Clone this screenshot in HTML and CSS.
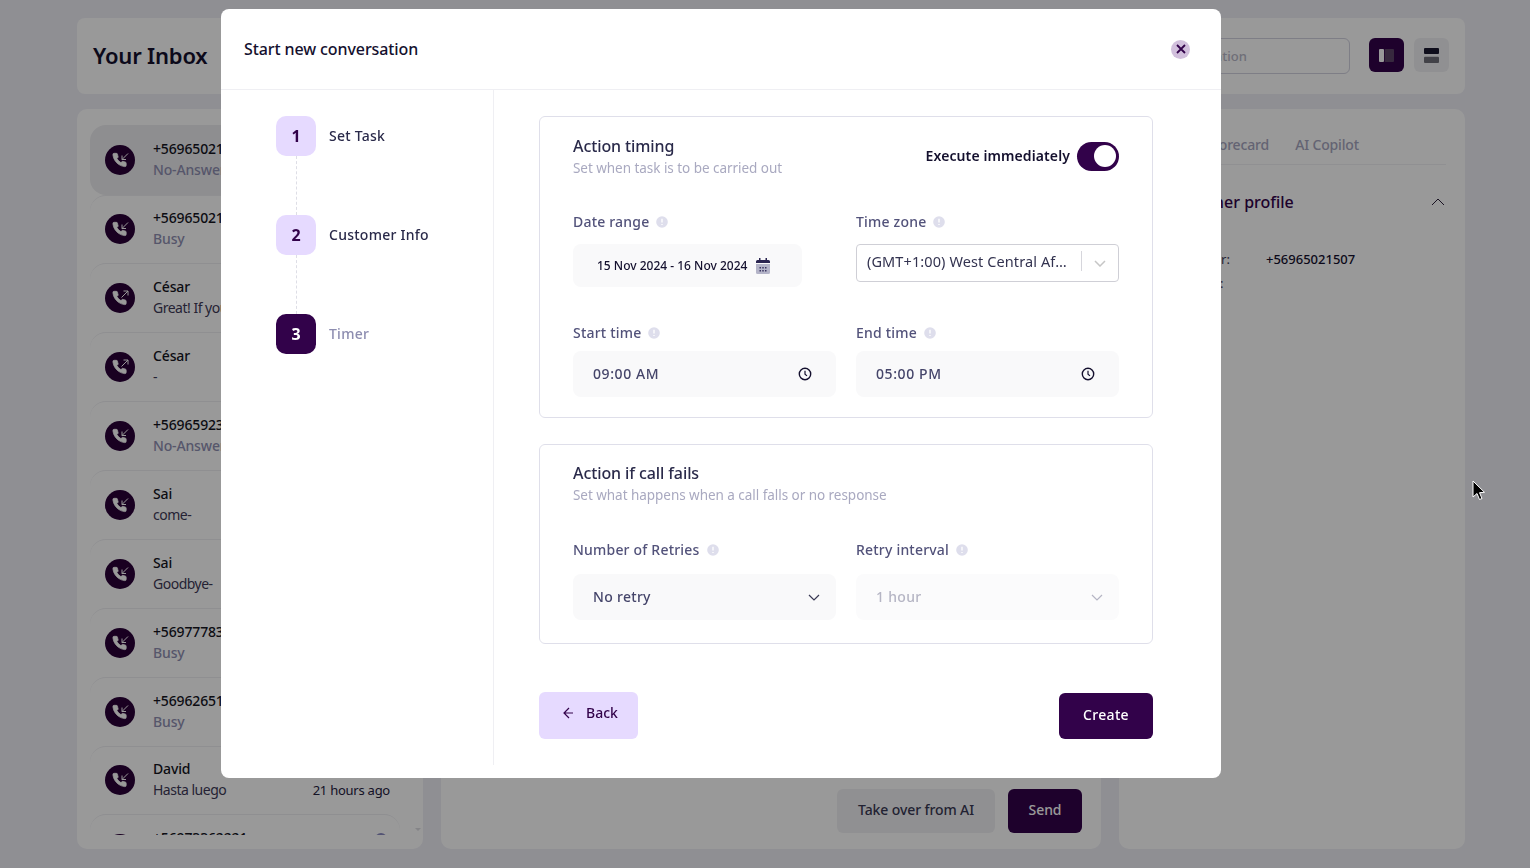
FILE: index.html
```html
<!DOCTYPE html>
<html lang="en">
<head>
<meta charset="utf-8">
<title>Your Inbox</title>
<link rel="stylesheet" href="styles.css">
</head>
<body>
<svg class="defs" width="0" height="0" aria-hidden="true">
  <symbol id="phone" viewBox="0 0 24 24"><path d="M22 16.92v3a2 2 0 0 1-2.18 2 19.79 19.79 0 0 1-8.63-3.07 19.5 19.5 0 0 1-6-6 19.79 19.79 0 0 1-3.07-8.67A2 2 0 0 1 4.11 2h3a2 2 0 0 1 2 1.72 12.84 12.84 0 0 0 .7 2.81 2 2 0 0 1-.45 2.11L8.09 9.91a16 16 0 0 0 6 6l1.27-1.27a2 2 0 0 1 2.11-.45 12.84 12.84 0 0 0 2.81.7A2 2 0 0 1 22 16.92z" fill="#fff" stroke="#fff" stroke-width="1.200"/></symbol>
  <symbol id="call-in" viewBox="0 0 30 30"><circle cx="15" cy="15" r="15" fill="#2a0038"/><use href="#phone" x="6.500" y="7" width="16" height="16"/><path d="M23 8.500 17 14.500M17 10.500v4h4" fill="none" stroke="#fff" stroke-width="1"/></symbol>
  <symbol id="call-out" viewBox="0 0 30 30"><circle cx="15" cy="15" r="15" fill="#2a0038"/><use href="#phone" x="6.500" y="7" width="16" height="16"/><path d="M16.500 14.500 23 8M18.500 8H23v4.500" fill="none" stroke="#fff" stroke-width="1"/></symbol>
  <symbol id="info" viewBox="0 0 12 12"><circle cx="6" cy="6" r="5.800" fill="#dedeec"/><path d="M6 2.800v3.800M6 8v1" stroke="#fff" stroke-width="1.300"/></symbol>
  <symbol id="clock" viewBox="0 0 14 14"><circle cx="7" cy="7" r="5.700" fill="none" stroke="#14102e" stroke-width="1.400"/><path d="M7 3.800V7.200l2 1.700" fill="none" stroke="#14102e" stroke-width="1.200"/></symbol>
</svg>

<div class="app">
  <header class="topbar">
    <h1 class="inbox-title">Your Inbox</h1>
    <div class="top-tools">
      <div class="search">Search conversation</div>
      <button class="view-btn view-btn-on"><svg width="15" height="13" viewBox="0 0 15 13"><rect width="5" height="13" rx="1" fill="#fff"/><rect x="5.700" width="9.300" height="13" rx="1" fill="#5c4468"/></svg></button>
      <button class="view-btn"><svg width="15" height="15" viewBox="0 0 15 15"><rect width="15" height="6" rx="1" fill="#191830"/><rect y="8.700" width="15" height="6.300" rx="1" fill="#6f6f78"/></svg></button>
    </div>
  </header>
  <main class="panels">
    <section class="panel list-panel">
      <div class="conv-list">
        <div class="conv conv-active"><svg class="call-icon"><use href="#call-in"/></svg><div class="conv-text"><div class="conv-name">+56965021507</div><div class="conv-status">No-Answer</div></div></div>
        <div class="conv"><svg class="call-icon"><use href="#call-in"/></svg><div class="conv-text"><div class="conv-name">+56965021507</div><div class="conv-status">Busy</div></div></div>
        <div class="conv"><svg class="call-icon"><use href="#call-out"/></svg><div class="conv-text"><div class="conv-name">César</div><div class="conv-msg">Great! If you</div></div></div>
        <div class="conv"><svg class="call-icon"><use href="#call-out"/></svg><div class="conv-text"><div class="conv-name">César</div><div class="conv-msg">-</div></div></div>
        <div class="conv"><svg class="call-icon"><use href="#call-in"/></svg><div class="conv-text"><div class="conv-name">+56965923</div><div class="conv-status">No-Answer</div></div></div>
        <div class="conv"><svg class="call-icon"><use href="#call-in"/></svg><div class="conv-text"><div class="conv-name">Sai</div><div class="conv-msg">come-</div></div></div>
        <div class="conv"><svg class="call-icon"><use href="#call-in"/></svg><div class="conv-text"><div class="conv-name">Sai</div><div class="conv-msg">Goodbye-</div></div></div>
        <div class="conv"><svg class="call-icon"><use href="#call-in"/></svg><div class="conv-text"><div class="conv-name">+56977783</div><div class="conv-status">Busy</div></div></div>
        <div class="conv"><svg class="call-icon"><use href="#call-in"/></svg><div class="conv-text"><div class="conv-name">+56962651</div><div class="conv-status">Busy</div></div></div>
        <div class="conv"><svg class="call-icon"><use href="#call-in"/></svg><div class="conv-text"><div class="conv-name">David</div><div class="conv-row"><span class="conv-msg">Hasta luego</span><span class="conv-time">21 hours ago</span></div></div></div>
        <div class="conv"><svg class="call-icon"><use href="#call-in"/></svg><div class="conv-text conv-text-last"><div class="conv-name">+56973362221</div><div class="conv-status">Busy</div><span class="mini-avatar"></span></div></div>
      </div>
      <span class="scroll-arrow"></span>
    </section>
    <section class="panel chat-panel">
      <div class="chat-actions">
        <button class="btn-takeover">Take over from AI</button>
        <button class="btn-send">Send</button>
      </div>
    </section>
    <section class="panel side-panel">
      <div class="side-tabs"><span>Scorecard</span><span>AI Copilot</span></div>
      <div class="side-head"><span class="side-title">Customer profile</span><svg width="14" height="8" viewBox="0 0 14 8"><path d="M1 7l6-6 6 6" fill="none" stroke="#2a1f3a" stroke-width="1"/></svg></div>
      <div class="side-row"><span class="side-key">Phone number:</span><span class="side-val">+56965021507</span></div>
      <div class="side-row"><span class="side-key">Email address:</span></div>
    </section>
  </main>
</div>

<div class="overlay">
  <div class="modal">
    <div class="modal-head">
      <h2 class="modal-title">Start new conversation</h2>
      <button class="close" aria-label="Close"><svg width="10" height="10" viewBox="0 0 10 10"><path d="M1 1l8 8M9 1l-8 8" stroke="#32024a" stroke-width="1.800"/></svg></button>
    </div>
    <div class="modal-body">
      <aside class="steps">
        <div class="step"><span class="step-num">1</span><span class="step-label">Set Task</span></div>
        <div class="step-line"></div>
        <div class="step"><span class="step-num">2</span><span class="step-label">Customer Info</span></div>
        <div class="step-line"></div>
        <div class="step step-current"><span class="step-num">3</span><span class="step-label">Timer</span></div>
      </aside>
      <div class="form">
        <section class="card">
          <div class="card-head">
            <div>
              <div class="card-title">Action timing</div>
              <div class="card-sub">Set when task is to be carried out</div>
            </div>
            <div class="exec">
              <span class="exec-label">Execute immediately</span>
              <span class="toggle"><span class="knob"></span></span>
            </div>
          </div>
          <div class="grid row-a">
            <div class="field">
              <label class="label">Date range <svg class="info"><use href="#info"/></svg></label>
              <div class="date"><span>15 Nov 2024 - 16 Nov 2024</span>
                <svg width="14" height="16" viewBox="0 0 14 16"><path d="M3 0h1.500v2h5V0H11v2h1.500A1.500 1.500 0 0 1 14 3.500V5H0V3.500A1.500 1.500 0 0 1 1.500 2H3z" fill="#2a2450"/><path d="M0 6h14v8.500a1.500 1.500 0 0 1-1.500 1.500h-11A1.500 1.500 0 0 1 0 14.500z" fill="#b4b4c8"/><path d="M3.500 9h1.500v1.500H3.500zM6.250 9h1.500v1.500h-1.500zM9 9h1.500v1.500H9zM3.500 12h1.500v1.500H3.500zM6.250 12h1.500v1.500h-1.500zM9 12h1.500v1.500H9z" fill="#3a3560"/></svg>
              </div>
            </div>
            <div class="field">
              <label class="label">Time zone <svg class="info"><use href="#info"/></svg></label>
              <div class="zone"><span class="zone-text">(GMT+1:00) West Central Africa</span><span class="zone-sep"></span><svg width="12" height="7" viewBox="0 0 12 7"><path d="M1 1l5 5 5-5" fill="none" stroke="#c6c6c6" stroke-width="1.500"/></svg></div>
            </div>
          </div>
          <div class="grid row-b">
            <div class="field">
              <label class="label label-tight">Start time <svg class="info"><use href="#info"/></svg></label>
              <div class="control control-time">09:00 AM<svg width="14" height="14"><use href="#clock"/></svg></div>
            </div>
            <div class="field">
              <label class="label label-tight">End time <svg class="info"><use href="#info"/></svg></label>
              <div class="control control-time">05:00 PM<svg width="14" height="14"><use href="#clock"/></svg></div>
            </div>
          </div>
        </section>
        <section class="card card-two">
          <div class="card-title">Action if call fails</div>
          <div class="card-sub">Set what happens when a call falls or no response</div>
          <div class="grid row-c">
            <div class="field">
              <label class="label label-wide">Number of Retries <svg class="info"><use href="#info"/></svg></label>
              <div class="control">No retry<svg width="12" height="7" viewBox="0 0 12 7"><path d="M1 1l5 5 5-5" fill="none" stroke="#3a3a55" stroke-width="1.200"/></svg></div>
            </div>
            <div class="field">
              <label class="label label-wide">Retry interval <svg class="info"><use href="#info"/></svg></label>
              <div class="control control-off">1 hour<svg width="12" height="7" viewBox="0 0 12 7"><path d="M1 1l5 5 5-5" fill="none" stroke="#b5b5c4" stroke-width="1.200"/></svg></div>
            </div>
          </div>
        </section>
        <div class="form-actions">
          <button class="btn-back"><svg width="12" height="12" viewBox="0 0 12 12"><path d="M6 1 1 6l5 5M1 6h9" fill="none" stroke="#32024a" stroke-width="1.200"/></svg><span>Back</span></button>
          <button class="btn-create">Create</button>
        </div>
      </div>
    </div>
  </div>
</div>

<svg class="pointer" width="14" height="22" viewBox="0 0 14 22"><path d="M1 1v16l4-3.500 2.500 6 2.500-1-2.500-5.800 5-.4z" fill="#000" stroke="#fff" stroke-width="1"/></svg>
</body>
</html>
```

FILE: styles.css
```css
* { box-sizing: border-box; }
html, body { margin: 0; height: 100%; }
body {
  position: relative;
  height: 868px;
  overflow: hidden;
  background: #efeff6;
  font-family: "Noto Sans", "Open Sans", sans-serif;
  color: #14102e;
}
button { font: inherit; border: 0; padding: 0; }
h1, h2 { margin: 0; }
.defs { position: absolute; }

/* Background app */
.app {
  display: flex;
  flex-direction: column;
  gap: 15px;
  height: 868px;
  padding: 18px 65px 19px 77px;
}
.topbar {
  display: flex;
  align-items: center;
  justify-content: space-between;
  height: 76px;
  padding: 0 16px 2px;
  background: #fff;
  border-radius: 8px;
}
.inbox-title { font-size: 22px; font-weight: 600; letter-spacing: -.2px; color: #14102e; }
.top-tools { display: flex; align-items: center; gap: 10px; }
.search {
  width: 264px;
  height: 36px;
  margin: 2px 9px 0 0;
  padding: 0 0 0 34px;
  border: 1px solid #d2d2e0;
  border-radius: 6px;
  font-size: 13px;
  font-weight: 500;
  line-height: 34px;
  color: #b8b8c8;
}
.view-btn {
  display: flex;
  align-items: center;
  justify-content: center;
  width: 35px;
  height: 34px;
  border-radius: 6px;
  background: #f1f1f4;
}
.view-btn-on { background: #32024a; }
.panels { display: flex; flex: 1; min-height: 0; gap: 18px; }
.panel { background: #fff; border-radius: 10px; }
.list-panel { position: relative; width: 346px; padding: 16px 23px 14px 13px; }
.scroll-arrow {
  position: absolute;
  right: 2px;
  bottom: 18px;
  border: 3px solid transparent;
  border-top: 3px solid #dcdce2;
  border-bottom: 0;
}
.conv-list { height: 100%; overflow: hidden; }
.conv {
  display: flex;
  align-items: center;
  gap: 18px;
  height: 68.875px;
  padding-left: 15px;
  border-top: 1px solid #eeeef2;
  border-radius: 16px;
}
.conv-active { height: 69.500px; background: #ededf0; border-top-color: transparent; }
.call-icon { flex: none; width: 30px; height: 30px; }
.conv-text { position: relative; flex: 1; padding: 0 10px 2px 0; font-size: 14px; line-height: 21px; letter-spacing: -.15px; }
.conv-name { font-weight: 500; color: #14141e; }
.conv-status { font-weight: 500; color: #8f8fb2; }
.conv-msg { color: #3e3a58; letter-spacing: -.5px; }
.conv-row { display: flex; justify-content: space-between; align-items: baseline; }
.conv-time { font-size: 13px; letter-spacing: -.25px; color: #24203e; }
.mini-avatar {
  position: absolute;
  right: 13px;
  top: 6px;
  width: 12px;
  height: 12px;
  border-radius: 50%;
  background: #8a8ac0;
}
.chat-panel {
  display: flex;
  flex: 1;
  align-items: flex-end;
  justify-content: flex-end;
  padding: 0 19px 16px 0;
}
.chat-actions { display: flex; gap: 13px; }
.btn-takeover, .btn-send { height: 44px; padding-bottom: 4px; border-radius: 6px; font-size: 14px; font-weight: 500; letter-spacing: -.1px; }
.btn-takeover { width: 158px; background: #f1f1f4; color: #3a3a55; }
.btn-send { width: 74px; background: #32024a; color: #fff; }
.side-panel { width: 346px; padding: 25px 19px 0 16px; }
.side-tabs {
  display: flex;
  justify-content: flex-end;
  gap: 26px;
  height: 31px;
  padding-right: 87px;
  border-bottom: 1px solid #f0f0f4;
  font-size: 14px;
  font-weight: 500;
  letter-spacing: -.15px;
  line-height: 22px;
  color: #a6a6c0;
}
.side-head {
  display: flex;
  align-items: center;
  justify-content: space-between;
  height: 82px;
  padding: 0 1px 8px 30px;
}
.side-title { font-size: 16px; font-weight: 500; color: #32024a; }
.side-row { display: flex; height: 24px; font-size: 13px; line-height: 24px; }
.side-key { width: 131px; color: #3e3a58; }
.side-val { font-weight: 500; }

/* Modal */
.overlay {
  position: fixed;
  inset: 0;
  padding: 9px 0 0 221px;
  background: rgba(0, 0, 0, .4);
}
.modal {
  display: flex;
  flex-direction: column;
  width: 1000px;
  height: 769px;
  background: #fff;
  border-radius: 8px;
}
.modal-head {
  display: flex;
  align-items: center;
  justify-content: space-between;
  flex: none;
  height: 81px;
  padding: 0 31px 0 23px;
  border-bottom: 1px solid #efeff3;
}
.modal-title { font-size: 16px; font-weight: 500; color: #14102e; letter-spacing: -.1px; }
.close {
  display: flex;
  align-items: center;
  justify-content: center;
  width: 19px;
  height: 19px;
  background: #d1bfdc;
  border-radius: 50%;
}
.modal-body { display: flex; height: 675px; }
.steps {
  flex: none;
  display: flex;
  flex-direction: column;
  width: 273px;
  padding: 26px 0 0 55px;
  border-right: 1px solid #efeff3;
}
.step { display: flex; align-items: center; gap: 13px; height: 40px; }
.step-num {
  display: flex;
  align-items: center;
  justify-content: center;
  width: 40px;
  height: 40px;
  border-radius: 10px;
  background: #e6daff;
  color: #32024a;
  font-size: 16px;
  font-weight: 700;
}
.step-label { padding-bottom: 2px; font-size: 14px; font-weight: 500; letter-spacing: .25px; color: #2a2a4a; }
.step-current .step-num { background: #32024a; color: #fff; }
.step-current .step-label { color: #8d8db0; }
.step-line { width: 0; height: 59px; margin-left: 20px; border-left: 1px dashed #dedee6; }
.form { flex: 1; padding: 26px 68px 0 45px; }
.card { height: 302px; padding: 19px 33px 20px; border: 1px solid #dfdfea; border-radius: 6px; }
.card-two { height: 200px; margin-top: 26px; padding-top: 18px; }
.card-head { display: flex; justify-content: space-between; align-items: center; height: 42px; }
.card-title { font-size: 16px; font-weight: 500; line-height: 20px; letter-spacing: -.1px; color: #2a2a4a; }
.card-sub { margin-top: 2px; font-size: 13.500px; line-height: 20px; letter-spacing: -.04px; color: #a9a9c0; }
.exec { display: flex; align-items: center; gap: 7px; margin-bottom: 2px; }
.exec-label { padding-bottom: 2px; font-size: 14px; font-weight: 600; letter-spacing: .1px; color: #14102e; }
.toggle {
  display: flex;
  align-items: center;
  justify-content: flex-end;
  width: 42px;
  height: 29px;
  padding-right: 3px;
  border-radius: 15px;
  background: #32024a;
}
.knob { width: 22px; height: 22px; border-radius: 50%; background: #fff; }
.grid { display: grid; grid-template-columns: 263px 263px; gap: 20px; }
.row-a { margin-top: 34px; }
.row-b { margin-top: 36px; }
.row-c { margin-top: 35px; }
.field { min-width: 0; }
.label {
  display: flex;
  align-items: center;
  gap: 7px;
  height: 20px;
  margin-bottom: 12px;
  padding-bottom: 2px;
  font-size: 14px;
  font-weight: 500;
  letter-spacing: .2px;
  color: #52527a;
}
.label .info { margin-top: 2px; }
.label-tight { margin-bottom: 8px; }
.label-wide { margin-bottom: 14px; }
.info { width: 12px; height: 12px; }
.date {
  display: flex;
  align-items: center;
  gap: 9px;
  width: 229px;
  height: 43px;
  padding-left: 24px;
  border-radius: 8px;
  background: #f9f9fa;
  font-size: 12px;
  font-weight: 500;
  white-space: nowrap;
}
.zone {
  display: flex;
  align-items: center;
  height: 38px;
  padding: 0 12px 4px 10px;
  border: 1px solid #cfcfd6;
  border-radius: 4px;
  font-size: 14.500px;
  color: #333350;
}
.zone-text { flex: 1; min-width: 0; overflow: hidden; white-space: nowrap; text-overflow: ellipsis; letter-spacing: .1px; }
.zone-sep { flex: none; width: 1px; height: 20px; margin: 0 12px; background: #d6d6dc; }
.zone svg { margin-top: 5px; }
.control {
  display: flex;
  align-items: center;
  justify-content: space-between;
  height: 46px;
  padding: 0 16px 2px 20px;
  border-radius: 8px;
  background: #f9f9fa;
  font-size: 14px;
  font-weight: 500;
  letter-spacing: .3px;
  color: #45456a;
}
.control svg { margin-top: 2px; }
.control-time { padding-right: 24px; letter-spacing: .6px; }
.control-off { background: #fbfbfc; color: #b5b5c4; }
.form-actions { display: flex; align-items: flex-end; justify-content: space-between; margin-top: 48px; }
.btn-back {
  display: flex;
  align-items: flex-start;
  gap: 11px;
  width: 99px;
  height: 47px;
  padding: 11px 0 0 24px;
  border-radius: 6px;
  background: #e6daff;
  color: #32024a;
  font-size: 14px;
  font-weight: 500;
}
.btn-back svg { margin-top: 4px; }
.btn-create { width: 94px; height: 46px; padding-bottom: 3px; border-radius: 6px; background: #32024a; color: #fff; font-size: 14px; font-weight: 500; letter-spacing: .3px; }
.pointer { position: fixed; left: 1472px; top: 480px; }
```
